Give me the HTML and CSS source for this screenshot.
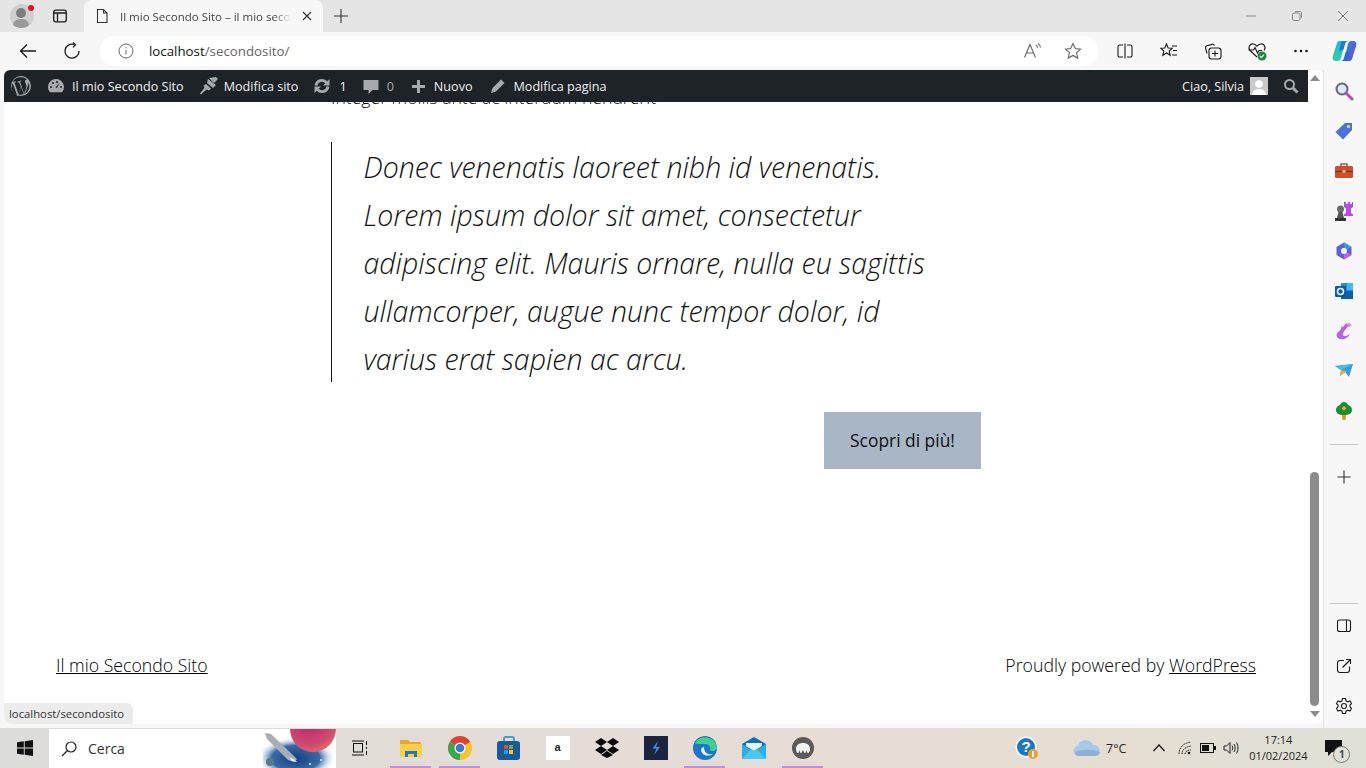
FILE: index.html
```html
<!DOCTYPE html>
<html lang="it">

<head>
    <meta charset="UTF-8">
    <title>Il mio Secondo Sito</title>
    <link rel="stylesheet" href="styles.css">
</head>

<body>
    <!-- barra schede -->
    <div class="tabstrip">
        <div class="profile">
            <svg width="24" height="24" viewBox="0 0 24 24"><circle cx="12" cy="12" r="12" fill="#cfcfcf"/><circle cx="11" cy="9" r="5" fill="#7d7d7d"/><path d="M3 21c1-5 4-6 8-6s7 1 8 6c-2 2-5 3-8 3s-6-1-8-3z" fill="#9a9a9a"/></svg>
            <span class="profile-dot"></span>
        </div>
        <div class="strip-btn">
            <svg width="16" height="16" viewBox="0 0 16 16" fill="none" stroke="#1a1a1a" stroke-width="1.3"><rect x="1.7" y="2.2" width="12.6" height="11.6" rx="2"/><path d="M1.7 5h12.6M5.5 5v8.8"/></svg>
        </div>
        <div class="tab">
            <svg width="16" height="16" viewBox="0 0 16 16" fill="none" stroke="#333" stroke-width="1.1"><path d="M3.5 1.5h6l3.5 3.5v9.5h-9.500zM9.5 1.5V5H13"/></svg>
            <span class="tab-title">Il mio Secondo Sito – il mio secondo</span>
            <svg width="12" height="12" viewBox="0 0 12 12" stroke="#333" stroke-width="1.2"><path d="M2 2l8 8M10 2l-8 8"/></svg>
        </div>
        <div class="strip-btn new-tab">
            <svg width="16" height="16" viewBox="0 0 16 16" stroke="#333" stroke-width="1.1"><path d="M8 1v14M1 8h14"/></svg>
        </div>
        <div class="window-btns">
            <svg width="12" height="12" viewBox="0 0 12 12" stroke="#8a8a8a"><path d="M1 6h10"/></svg>
            <svg width="12" height="12" viewBox="0 0 12 12" fill="none" stroke="#8a8a8a"><rect x="1.5" y="3" width="7.5" height="7.5" rx="1.5"/><path d="M4 1.5h5c1 0 1.5.5 1.5 1.5v5"/></svg>
            <svg width="12" height="12" viewBox="0 0 12 12" stroke="#777"><path d="M1 1l10 10M11 1L1 11"/></svg>
        </div>
    </div>

    <!-- barra indirizzi -->
    <div class="toolbar">
        <div class="nav-btn back">
            <svg width="18" height="18" viewBox="0 0 18 18" fill="none" stroke="#1a1a1a" stroke-width="1.3"><path d="M17 9H1.500M8 2.500L1.500 9 8 15.500"/></svg>
        </div>
        <div class="nav-btn reload">
            <svg width="18" height="18" viewBox="0 0 18 18" fill="none" stroke="#1a1a1a" stroke-width="1.3"><path d="M11 2.400a7 7 0 1 0 5 6.600"/><path d="M10 .5l2.500 2.200L10 5.400"/></svg>
        </div>
        <div class="address">
            <svg width="16" height="16" viewBox="0 0 16 16" fill="none" stroke="#666"><circle cx="8" cy="8" r="7"/><path d="M8 7v4.500M8 4.200v1.200"/></svg>
            <span class="url"><b>localhost</b>/secondosito/</span>
            <svg class="read" width="20" height="18" viewBox="0 0 20 18" fill="none" stroke="#666" stroke-width="1.1"><path d="M1.500 15.500L7 2.500l5.500 13M3.500 11h7"/><path d="M13 3c1 .6 1.500 1.600 1.700 2.600M15 1.500c1.400 1 2.300 2.400 2.500 4"/></svg>
            <svg class="fav" width="18" height="18" viewBox="0 0 18 18" fill="none" stroke="#666" stroke-width="1.1"><path d="M9 1.500l2.300 5 5.200.6-3.900 3.600 1.100 5.400L9 13.400l-4.700 2.700 1.100-5.400L1.500 7.100l5.200-.6z"/></svg>
        </div>
        <div class="tool-icons">
            <div class="tool-slot"><svg width="16" height="16" viewBox="0 0 16 16" fill="none" stroke="#1a1a1a" stroke-width="1.1"><path d="M6 2H2.500A1.500 1.500 0 0 0 1 3.500v9A1.500 1.500 0 0 0 2.500 14H6M10 2h3.500A1.500 1.500 0 0 1 15 3.500v9a1.500 1.500 0 0 1-1.500 1.500H10M8 .5v15"/></svg></div>
            <div class="tool-slot"><svg width="18" height="18" viewBox="0 0 18 18" fill="none" stroke="#1a1a1a" stroke-width="1.1"><path d="M6.500 2l1.700 4 4 .3-3 2.700 1 4.300-3.700-2.300L2.800 13.300l1-4.300-3-2.700 4-.3zM12 4h5M13 8.500h4M12 13h5"/></svg></div>
            <div class="tool-slot"><svg width="18" height="18" viewBox="0 0 18 18" fill="none" stroke="#1a1a1a" stroke-width="1.1"><path d="M3 11.500L1.600 6.200A2 2 0 0 1 3 3.800l5-1.400a2 2 0 0 1 2.400 1.100"/><rect x="5" y="6" width="12" height="11" rx="2.500"/><path d="M11 8.500v6M8 11.500h6"/></svg></div>
            <div class="tool-slot"><svg width="20" height="20" viewBox="0 0 20 20"><path d="M10 16L3 9.500C.5 6.500 3 2 6.500 3c1.500.3 2.700 1.200 3.500 2.300C10.800 4.200 12 3.300 13.500 3 17 2 19.500 6.500 17 9.500" fill="none" stroke="#1a1a1a" stroke-width="1.1"/><path d="M1.500 9h5l1.500-2.500L10.500 12l1.500-2.500h3" fill="none" stroke="#1a1a1a" stroke-width="1.1"/><circle cx="15" cy="15" r="4.500" fill="#1f8a3a"/><path d="M13 15l1.500 1.500 2.500-2.800" fill="none" stroke="#fff" stroke-width="1.1"/></svg></div>
            <div class="tool-slot"><svg width="16" height="16" viewBox="0 0 16 16" fill="#1a1a1a"><circle cx="2.500" cy="8" r="1.300"/><circle cx="8" cy="8" r="1.300"/><circle cx="13.500" cy="8" r="1.300"/></svg></div>
        </div>
        <svg class="copilot" width="25" height="24" viewBox="0 0 25 24">
            <defs>
                <linearGradient id="copLeft" x1="0" y1="0" x2="0" y2="1"><stop offset="0" stop-color="#1fb8d8"/><stop offset="1" stop-color="#2fd0a0"/></linearGradient>
                <linearGradient id="copRight" x1="0" y1="0" x2="1" y2="1"><stop offset="0" stop-color="#2a90e8"/><stop offset="1" stop-color="#6a48d8"/></linearGradient>
            </defs>
            <path d="M8 2h8c-2 0-3 1-3.500 3L9 19c-.5 2-1.500 3-3.500 3H4c-2.500 0-4-2-3.200-4.500L5 4c.5-1.500 1.500-2 3-2z" fill="url(#copLeft)"/>
            <path d="M17 22H9c2 0 3-1 3.500-3L16 5c.5-2 1.500-3 3.500-3H21c2.500 0 4 2 3.200 4.500L20 20c-.5 1.500-1.500 2-3 2z" fill="url(#copRight)"/>
            <path d="M13 5l-1.500 5.500L7 12l2-8c.3-1.200 1-2 2.500-2H16c-1.500 0-2.500 1-3 3z" fill="#1878e0"/>
            <path d="M12 19l1.500-5.500L18 12l-2 8c-.3 1.200-1 2-2.500 2H9c1.500 0 2.500-1 3-3z" fill="#2868e0"/>
        </svg>
    </div>

    <div class="workspace">
        <!-- finestra del sito -->
        <div class="viewport">
            <div class="adminbar">
                <div class="ab-item ab-logo">
                    <svg width="20" height="20" viewBox="0 0 20 20" fill="#a7aaad"><path d="M10 0a10 10 0 1 0 0 20 10 10 0 0 0 0-20zm0 1.200a8.800 8.800 0 0 1 6 2.300c-1.600-.1-2.700 1.700-1.700 3.200.5 1 1.100 2 1.100 3.500 0 1-.4 2.300-1 3.900l-1.200 4-4.300-12.600h1.200c.5-.1.500-.9 0-.9L7 5.600c-.5 0-.6.800 0 .9h1.100l1.700 4.600-2.400 7L3.400 6.500h1.300c.5-.1.500-.9 0-.9l-3 .1A8.800 8.800 0 0 1 10 1.200zM1.700 7.200l4.500 12.300a8.800 8.800 0 0 1-4.500-12.300zm8.400 3.800l2.600 7.300a8.800 8.800 0 0 1-5.300.1zm7.200-4.800a8.800 8.800 0 0 1-3.300 11.800l2.700-7.700c.5-1.300.7-2.400.6-4.100z"/></svg>
                </div>
                <div class="ab-item ab-site">
                    <svg width="18" height="18" viewBox="0 0 18 18" fill="#a7aaad"><path d="M9 2a8 8 0 0 0-8 8c0 2 .7 3.800 2 5.200h12A8 8 0 0 0 9 2z"/><g fill="#1d2327"><circle cx="4" cy="10" r="1"/><circle cx="6" cy="6" r="1"/><circle cx="10" cy="5" r="1"/><circle cx="14" cy="10" r="1"/><path d="M12.800 5.500L10 11l-1.500-.8z"/></g></svg>
                    <span>Il mio Secondo Sito</span>
                </div>
                <div class="ab-item ab-custom">
                    <svg width="20" height="20" viewBox="0 0 20 20" fill="#a7aaad"><path d="M10 2l5 5 4-4-2-2zM9 3l8 6-3 3-6-5zM7 8l5 4.500-2 2c-1-1-2-1-3-.5l-5 4.500-1-1 4-5c.5-1 .5-2-.5-3z"/></svg>
                    <span>Modifica sito</span>
                </div>
                <div class="ab-item ab-updates">
                    <svg width="18" height="18" viewBox="0 0 18 18"><g fill="none" stroke="#a7aaad" stroke-width="2.800"><path d="M3 8.500a6 6 0 0 1 10.500-3"/><path d="M15 9.500a6 6 0 0 1-10.500 3"/></g><g fill="#a7aaad"><path d="M16.500 2v6.500H10z"/><path d="M1.500 16v-6.500H8z"/></g></svg>
                    <span>1</span>
                </div>
                <div class="ab-item ab-comments">
                    <svg width="18" height="18" viewBox="0 0 18 18" fill="#a7aaad"><path d="M1.500 3h15v10h-6l-4 4v-4h-5z"/></svg>
                    <span class="dim">0</span>
                </div>
                <div class="ab-item ab-new">
                    <svg width="15" height="15" viewBox="0 0 15 15" fill="#a7aaad"><path d="M6 1h3v5h5v3H9v5H6V9H1V6h5z"/></svg>
                    <span>Nuovo</span>
                </div>
                <div class="ab-item ab-edit">
                    <svg width="16" height="16" viewBox="0 0 16 16" fill="#a7aaad"><path d="M11 1.500l3.500 3.500-8.500 8.500-5 1.500 1.500-5z"/></svg>
                    <span>Modifica pagina</span>
                </div>
                <div class="ab-right">
                    <span>Ciao, Silvia</span>
                    <svg class="avatar" width="18" height="18" viewBox="0 0 18 18"><rect width="18" height="18" fill="#c9c9c9"/><circle cx="9" cy="7" r="3.800" fill="#fff"/><path d="M2 18c.5-4 3-6 7-6s6.500 2 7 6z" fill="#fff"/></svg>
                    <svg class="ab-search" width="16" height="16" viewBox="0 0 16 16" fill="none" stroke="#a7aaad"><circle cx="6.500" cy="6.500" r="4.500" stroke-width="2"/><path d="M10 10l4.500 4.500" stroke-width="3"/></svg>
                </div>
            </div>

            <div class="page-row">
                <div class="page">
                    <div class="content">
                        <div class="cut-wrap"><p class="cut-line">Integer mollis ante ac interdum hendrerit</p></div>
                        <blockquote><p>Donec venenatis laoreet nibh id venenatis. Lorem ipsum dolor sit amet, consectetur adipiscing elit. Mauris ornare, nulla eu sagittis ullamcorper, augue nunc tempor dolor, id varius erat sapien ac arcu.</p></blockquote>
                        <div class="btn-row"><a class="more-btn">Scopri di più!</a></div>
                    </div>
                    <div class="site-footer">
                        <a>Il mio Secondo Sito</a>
                        <span>Proudly powered by <a>WordPress</a></span>
                    </div>
                </div>
                <div class="scrollbar">
                    <span class="arrow-up"></span>
                    <div class="thumb"></div>
                    <span class="arrow-down"></span>
                </div>
            </div>
            <div class="status-tip">localhost/secondosito</div>
        </div>

        <!-- barra laterale del browser -->
        <div class="sidebar">
            <div class="side-icon"><svg width="20" height="20" viewBox="0 0 20 20" fill="none"><circle cx="8" cy="8" r="5.500" stroke="#5a6a78" stroke-width="2" fill="#d8ecf8"/><path d="M12 12l6 6" stroke="#b04ac8" stroke-width="3" stroke-linecap="round"/></svg></div>
            <div class="side-icon"><svg width="18" height="18" viewBox="0 0 18 18"><path d="M10 1h7v7L8 17.500 .5 10z" fill="#4a70e0"/><circle cx="13.500" cy="4.500" r="1.800" fill="#c8d850"/></svg></div>
            <div class="side-icon"><svg width="18" height="16" viewBox="0 0 18 16"><path d="M6 3V1h6v2" fill="none" stroke="#b05a30" stroke-width="1.500"/><rect y="3" width="18" height="12" rx="1.500" fill="#c8502a"/><rect y="8" width="18" height="1.200" fill="#7a2e14"/><rect x="7.500" y="7" width="3" height="3" fill="#f0b060"/></svg></div>
            <div class="side-icon"><svg width="18" height="20" viewBox="0 0 18 20"><path d="M9 1h2v2h2V1h2v2h2V1h1v5l-2 1.500V12l2 1.500V15H9v-1.500l2-1.500V7.500L9 6z" fill="#b84ae8"/><circle cx="5.500" cy="8" r="3.500" fill="#6a6a6a"/><path d="M3.500 11h4L9 17H2z" fill="#555"/><rect y="17" width="11" height="3" fill="#333"/></svg></div>
            <div class="side-icon"><svg width="18" height="18" viewBox="0 0 18 18"><path d="M9 .5l7.500 4.500v8L9 17.500 1.500 13V5z" fill="#5a62d8"/><path d="M9 .5l7.500 4.500-4 2.500L9 5.500z" fill="#3a9ae0"/><path d="M9 17.500l7.500-4.500-4-2.500L9 12.500z" fill="#c860d8"/><circle cx="9" cy="9" r="3" fill="#f4f4f8"/></svg></div>
            <div class="side-icon"><svg width="18" height="18" viewBox="0 0 18 18"><rect x="6" y="1" width="12" height="16" rx="1" fill="#1a90d8"/><rect x="12" y="1" width="6" height="7" fill="#40b8f0"/><rect x="6" y="9" width="12" height="8" fill="#0a60b0"/><rect y="4" width="11" height="11" rx="1" fill="#0a5ab0"/><circle cx="5.500" cy="9.500" r="3" fill="none" stroke="#fff" stroke-width="1.500"/></svg></div>
            <div class="side-icon"><svg width="20" height="20" viewBox="0 0 18 20"><path d="M6 3c1 4 0 6-3 8-2 2-2 6 2 7 4 1 8-1 10-5-3 2-6 3-7 1-1-2 3-6 6-10L11 2C10 4 8 6 7 6z" fill="#b860e8"/><path d="M14 1l1 2 2 1-2 1-1 2-1-2-2-1 2-1z" fill="#c890f0"/></svg></div>
            <div class="side-icon"><svg width="18" height="14" viewBox="0 0 18 14"><path d="M0 2l18-2-4 13-4-5-5 4 1-6z" fill="#3a9ae0"/><path d="M0 2l6 4 12-6z" fill="#40c0f0"/><path d="M5 12l1-6 6 1z" fill="#e0b040"/></svg></div>
            <div class="side-icon"><svg width="16" height="18" viewBox="0 0 16 18"><path d="M8 0c2 0 3.500 1.500 4 3 2.500.5 4 2.500 4 5 0 3-2.500 5-8 5s-8-2-8-5c0-2.500 1.500-4.500 4-5 .5-1.500 2-3 4-3z" fill="#1f8a2e"/><path d="M6 13h4l-.5 5h-3z" fill="#c8a030"/><path d="M8 4l2.200 2.200L8 8.400 5.800 6.200z" fill="#d8c040"/></svg></div>
            <div class="side-sep"></div>
            <div class="side-icon"><svg width="14" height="14" viewBox="0 0 14 14" stroke="#333" stroke-width="1.1"><path d="M7 .5v13M.5 7h13"/></svg></div>
            <div class="side-spacer"></div>
            <div class="side-sep side-sep-low"></div>
            <div class="side-icon"><svg width="16" height="14" viewBox="0 0 16 14" fill="none" stroke="#1a1a1a" stroke-width="1.1"><rect x="1.500" y="1" width="13" height="11.500" rx="2"/><path d="M10.500 1v11.500"/></svg></div>
            <div class="side-icon"><svg width="16" height="16" viewBox="0 0 16 16" fill="none" stroke="#1a1a1a" stroke-width="1.1"><path d="M8 2.500H4A2.500 2.500 0 0 0 1.500 5v7A2.500 2.500 0 0 0 4 14.500h7a2.500 2.500 0 0 0 2.500-2.500V8.500M6.500 9.500l8-8M10 1.500h4.500V6"/></svg></div>
            <div class="side-icon"><svg width="18" height="18" viewBox="0 0 18 18" fill="none" stroke="#1a1a1a" stroke-width="1.1"><circle cx="9" cy="9" r="2.500"/><path d="M7.500 1.500h3l.5 2.300 1.700 1 2.300-.8 1.500 2.600L15 8v2l1.500 1.400-1.500 2.600-2.300-.8-1.700 1-.5 2.300h-3l-.5-2.300-1.700-1-2.300.8-1.500-2.600L3 10V8L1.500 6.600 3 4l2.300.8 1.700-1z"/></svg></div>
        </div>
    </div>

    <!-- barra di Windows -->
    <div class="taskbar">
        <div class="start">
            <svg width="16" height="16" viewBox="0 0 16 16" fill="#111"><path d="M0 2.300l6.800-1v6.300H0zM7.700 1.200L16 0v7.600H7.700zM0 8.500h6.800v6.200L0 13.700zM7.700 8.500H16V16l-8.300-1.200z"/></svg>
        </div>
        <div class="search-box">
            <svg width="16" height="16" viewBox="0 0 16 16" fill="none" stroke="#222" stroke-width="1.2"><circle cx="10" cy="6" r="5"/><path d="M6.500 9.500L1 15"/></svg>
            <span>Cerca</span>
            <svg class="search-art" width="73" height="39" viewBox="0 0 73 39">
                <defs>
                    <radialGradient id="planet" cx=".4" cy=".3" r=".8"><stop offset="0" stop-color="#b8206e"/><stop offset=".7" stop-color="#d04a70"/><stop offset="1" stop-color="#e8785a"/></radialGradient>
                    <radialGradient id="space" cx=".45" cy=".75" r=".55"><stop offset="0" stop-color="#123f80"/><stop offset=".6" stop-color="#3a6aa8"/><stop offset="1" stop-color="#fff" stop-opacity="0"/></radialGradient>
                </defs>
                <rect width="73" height="39" fill="url(#space)"/>
                <circle cx="50" cy="0" r="23" fill="url(#planet)"/>
                <path d="M2 4l6 1 26 25-3 3-6-2L4 10z" fill="#a8aeb4"/>
                <path d="M26 28l6 3 2 2-5-1z" fill="#e8f4ff"/>
                <circle cx="7" cy="33" r="4" fill="#5a7a88"/>
                <circle cx="47" cy="35" r="1" fill="#fff"/>
                <circle cx="58" cy="31" r="1" fill="#dfe8f4"/>
            </svg>
        </div>
        <div class="task-icon task-view">
            <svg width="17" height="16" viewBox="0 0 17 16" fill="none" stroke="#111"><rect x="2.500" y="3.500" width="9" height="8.500"/><path d="M1 1h12M1 15h12M15.500 1v4M15.500 7v2M15.500 11v4"/></svg>
        </div>
        <div class="task-icon running">
            <svg width="22" height="20" viewBox="0 0 22 20"><path d="M0 2h8l2 2h11v14H0z" fill="#e8a82a"/><rect y="6" width="22" height="13" fill="#f8d048"/><path d="M5 13h12v6h-3v-3H8v3H5z" fill="#1a78c8"/></svg>
        </div>
        <div class="task-icon running">
            <svg width="24" height="24" viewBox="0 0 24 24"><path d="M1.600 6A12 12 0 0 1 22.400 6L12 12z" fill="#e0432f"/><path d="M22.400 6A12 12 0 0 1 12 24L12 12z" fill="#f8c42a"/><path d="M12 24A12 12 0 0 1 1.600 6L12 12z" fill="#3aa84a"/><circle cx="12" cy="12" r="5.500" fill="#fff"/><circle cx="12" cy="12" r="4.300" fill="#3a78e0"/></svg>
        </div>
        <div class="task-icon">
            <svg width="24" height="24" viewBox="0 0 24 24"><path d="M7 5V3a2 2 0 0 1 2-2h6a2 2 0 0 1 2 2v2" fill="none" stroke="#3aa0e0" stroke-width="2"/><rect y="5" width="23" height="19" rx="3" fill="#1a5a9a"/><rect x="7" y="9" width="4" height="4" fill="#e84a2a"/><rect x="12" y="9" width="4" height="4" fill="#6ab82a"/><rect x="7" y="14" width="4" height="4" fill="#2a9ae8"/><rect x="12" y="14" width="4" height="4" fill="#f8c02a"/></svg>
        </div>
        <div class="task-icon">
            <div class="amazon">a</div>
        </div>
        <div class="task-icon">
            <svg width="24" height="20" viewBox="0 0 24 20" fill="#0a0a0a"><path d="M6 0l6 4-6 4-6-4zM18 0l6 4-6 4-6-4zM6 8l6 4-6 4-6-4zM18 8l6 4-6 4-6-4zM12 13l6 4-6 3-6-3z"/></svg>
        </div>
        <div class="task-icon">
            <svg width="24" height="24" viewBox="0 0 24 24"><rect width="24" height="24" fill="#1c2340"/><path d="M14 5L8.500 12.500h4L10 19l6-8h-4z" fill="#2a9ae8"/></svg>
        </div>
        <div class="task-icon running">
            <svg width="24" height="24" viewBox="0 0 24 24"><circle cx="12" cy="12" r="12" fill="#1a78c8"/><path d="M2 7a12 12 0 0 1 22 4c0 4-5 5-7 3 1-3-1-6-5-6-5 0-9 0-10-1z" fill="#40d090"/><path d="M11 11c-3 0-4 4-1 7 3 2 7 2 10 0-5 1-9-1-9-7z" fill="#e8f4f8"/></svg>
        </div>
        <div class="task-icon">
            <svg width="24" height="22" viewBox="0 0 24 22"><rect y="7" width="24" height="15" fill="#2ab0e8"/><path d="M0 7l12-7 12 7-12 8z" fill="#0a70c0"/><path d="M4 6h16v3l-8 5-8-5z" fill="#e8f8ff"/><path d="M0 22l9-10 3 2 3-2 9 10z" fill="#48c8f0"/></svg>
        </div>
        <div class="task-icon running">
            <svg width="22" height="22" viewBox="0 0 22 22"><circle cx="11" cy="11" r="11" fill="#5a5a5a"/><path d="M4 12c0-4 3-6 7-6s7 2 7 6c0 2-1 4-2 4s-1-2-2-3c0 2 0 3-1 3s-1-2-2-3c-1 1-1 3-2 3s-1-1-1-3c-1 1-1 3-2 3s-2-2-2-4z" fill="#f2f2f2"/></svg>
        </div>

        <div class="tray">
            <svg class="help" width="24" height="24" viewBox="0 0 24 24"><circle cx="11" cy="11" r="10.500" fill="#fff"/><circle cx="11" cy="11" r="9" fill="#1a78c8"/><text x="11" y="16" font-family="Liberation Sans" font-size="15" font-weight="700" fill="#fff" text-anchor="middle">?</text><circle cx="18" cy="18" r="5" fill="#e8a030"/><rect x="17.200" y="15" width="1.600" height="6" fill="#fff"/></svg>
            <svg class="cloud" width="28" height="18" viewBox="0 0 28 18"><path d="M6 17a5 5 0 0 1-1-10 8 8 0 0 1 15-1 5.500 5.500 0 0 1 2 11z" fill="#a8c8e8"/><path d="M2 13c6-3 18-3 25 0a5 5 0 0 1-5 4H6a5 5 0 0 1-4-4z" fill="#8ab0d8"/></svg>
            <span class="temp">7°C</span>
            <svg class="chevron" width="12" height="8" viewBox="0 0 12 8" fill="none" stroke="#111" stroke-width="1.2"><path d="M.5 7L6 1l5.500 6"/></svg>
            <svg class="wifi" width="14" height="14" viewBox="0 0 14 14" fill="none" stroke="#222"><path d="M1 13C1 7 5 2 13 1M4 13c0-4 3-7 9-8M7 13c0-2 2-4 6-4" stroke-dasharray="1.500 .8"/><circle cx="11" cy="12" r="1.300" fill="#111" stroke="none"/></svg>
            <svg class="battery" width="16" height="10" viewBox="0 0 16 10"><rect x=".5" y=".5" width="13" height="9" fill="none" stroke="#111"/><rect x="2" y="2" width="7" height="6" fill="#111"/><rect x="14" y="3" width="2" height="4" fill="#111"/></svg>
            <svg class="speaker" width="16" height="14" viewBox="0 0 16 14" fill="none" stroke="#222"><path d="M1 5h2.500L7 1.500v11L3.500 9H1zM9 4.500c1 1.500 1 3.500 0 5M11 3c1.600 2.500 1.600 5.500 0 8M13.500 1.500c2 3.500 2 7.500 0 11"/></svg>
            <div class="clock">17:14<br>01/02/2024</div>
            <div class="notify">
                <svg width="17" height="17" viewBox="0 0 17 17" fill="#111"><path d="M0 0h17v12H7l-4 4v-4H0z"/></svg>
                <span class="notify-count">1</span>
            </div>
        </div>
    </div>
</body>

</html>
```

FILE: styles.css
```css
* {
    box-sizing: border-box;
}

html,
body {
    margin: 0;
    height: 768px;
    overflow: hidden;
}

body {
    display: flex;
    flex-direction: column;
    font-family: "Open Sans", sans-serif;
    background-color: #f7f7f7;
    color: #111;
}

svg {
    display: block;
    flex-shrink: 0;
}

/* barra schede */
.tabstrip {
    height: 32px;
    display: flex;
    align-items: flex-end;
    background: #e5e5e5;
}

.profile {
    position: relative;
    width: 36px;
    height: 32px;
    padding: 4px 0 0 10px;
}

.profile-dot {
    position: absolute;
    left: 28px;
    top: 5px;
    width: 6px;
    height: 6px;
    border-radius: 50%;
    background: #e81123;
}

.strip-btn {
    width: 48px;
    height: 32px;
    display: flex;
    align-items: center;
    justify-content: center;
}

.tab {
    width: 239px;
    height: 32px;
    display: flex;
    align-items: center;
    padding: 0 10px;
    gap: 10px;
    background: #f7f7f7;
    border-radius: 8px 8px 0 0;
}

.tab-title {
    flex: 1;
    font-size: 11.5px;
    color: #444;
    white-space: nowrap;
    overflow: hidden;
    -webkit-mask-image: linear-gradient(to right, #000 90%, transparent);
    mask-image: linear-gradient(to right, #000 90%, transparent);
}

.new-tab {
    width: 36px;
}

.window-btns {
    margin-left: auto;
    height: 32px;
    display: flex;
    align-items: center;
    gap: 34px;
    padding-right: 17px;
}

/* barra indirizzi */
.toolbar {
    height: 38px;
    display: flex;
    align-items: center;
    background: #f7f7f7;
}

.nav-btn {
    width: 44px;
    display: flex;
    justify-content: center;
}

.back {
    margin-left: 6px;
}

.address {
    width: 998px;
    height: 30px;
    margin-left: 6px;
    display: flex;
    align-items: center;
    padding: 0 16px 0 18px;
    background: #fff;
    border-radius: 15px;
}

.url {
    margin-left: 15px;
    font-size: 13.3px;
    color: #666;
}

.url b {
    font-weight: 400;
    color: #111;
}

.read {
    margin-left: auto;
}

.fav {
    margin-left: 21px;
}

.tool-icons {
    display: flex;
    align-items: center;
    margin-left: 5px;
}

.tool-slot {
    width: 44px;
    display: flex;
    justify-content: center;
}

.copilot {
    margin-left: 9px;
}

/* zona centrale */
.workspace {
    height: 658px;
    display: flex;
}

.viewport {
    position: relative;
    width: 1319px;
    height: 654px;
    margin-left: 4px;
    display: flex;
    flex-direction: column;
    background: #fff;
    border-radius: 6px 6px 8px 8px;
    overflow: hidden;
}

.adminbar {
    height: 32px;
    width: 1304px;
    display: flex;
    align-items: center;
    background: #1d2327;
    color: #f0f0f1;
    font-size: 12.6px;
    z-index: 1;
}

.ab-item {
    display: flex;
    align-items: center;
    gap: 8px;
    white-space: nowrap;
}

.ab-logo {
    margin-left: 7px;
}

.ab-site {
    margin-left: 16px;
    gap: 7px;
}

.ab-custom {
    margin-left: 15px;
    gap: 5px;
}

.ab-updates {
    margin-left: 15px;
}

.ab-comments {
    margin-left: 15px;
    gap: 7px;
}

.ab-new {
    margin-left: 17px;
}

.ab-edit {
    margin-left: 17px;
}

.dim {
    color: #a7aaad;
}

.ab-right {
    margin-left: auto;
    display: flex;
    align-items: center;
    padding-right: 9px;
}

.avatar {
    margin-left: 6px;
}

.ab-search {
    margin-left: 15px;
}

.page-row {
    flex: 1;
    min-height: 0;
    display: flex;
}

.page {
    width: 1304px;
    display: flex;
    flex-direction: column;
    justify-content: space-between;
    font-size: 18px;
}

.content {
    width: 650px;
    margin-left: 327px;
}

/* riga tagliata dallo scroll, sotto la admin bar */
.cut-wrap {
    height: 10px;
    overflow: hidden;
}

.cut-line {
    margin: -17px 0 0;
    line-height: 25px;
    font-size: 17.6px;
    font-weight: 300;
    white-space: nowrap;
}

blockquote {
    display: flow-root;
    margin: 30px 0 0;
    padding: 0 30px 0 31.5px;
    border-left: 1px solid #111;
    font-size: 28.5px;
    line-height: 48px;
    font-style: italic;
    font-weight: 300;
}

blockquote p {
    margin: 1px 0 -1px;
}

.btn-row {
    display: flex;
    justify-content: flex-end;
    margin-top: 30px;
}

.more-btn {
    width: 157px;
    height: 57px;
    padding-bottom: 2px;
    display: flex;
    align-items: center;
    justify-content: center;
    background: #a9b6c6;
    font-size: 17.4px;
}

.site-footer {
    display: flex;
    justify-content: space-between;
    padding: 0 52px 47px;
    font-size: 17.7px;
    font-weight: 300;
    color: #000;
}

.site-footer a {
    text-decoration: underline;
}

.scrollbar {
    position: relative;
    width: 15px;
}

.thumb {
    position: absolute;
    left: 2px;
    top: 370px;
    width: 9px;
    height: 234px;
    border-radius: 5px;
    background: #8b8b8b;
}

.arrow-up,
.arrow-down {
    position: absolute;
    left: 2px;
    width: 0;
    height: 0;
    border-left: 5px solid transparent;
    border-right: 5px solid transparent;
}

.arrow-up {
    top: -27px;
    border-bottom: 6px solid #8b8b8b;
}

.arrow-down {
    bottom: 7px;
    border-top: 6px solid #8b8b8b;
}

.status-tip {
    position: absolute;
    left: 0;
    bottom: 0;
    height: 21px;
    width: 129px;
    padding-left: 5px;
    line-height: 21px;
    font-size: 11.3px;
    color: #333;
    background: #ececec;
    border-radius: 0 6px 0 0;
    z-index: 2;
}

/* barra laterale */
.sidebar {
    width: 43px;
    display: flex;
    flex-direction: column;
    padding: 1px 2px 2px 0;
    border-left: 1px solid #e4e4e4;
}

.side-icon {
    height: 40px;
    display: flex;
    align-items: center;
    justify-content: center;
    flex-shrink: 0;
}

.side-sep {
    height: 1px;
    width: 28px;
    margin: 13px auto 12px;
    background: #c8c8c8;
    flex-shrink: 0;
}

.side-sep-low {
    margin-bottom: 2px;
}

.side-spacer {
    flex: 1;
}

/* barra di Windows */
.taskbar {
    height: 40px;
    display: flex;
    align-items: center;
    background: linear-gradient(to right, #dcdcd8, #e6dcd6 50%, #e6ddd2 80%, #dfe0d6);
}

.start {
    width: 49px;
    display: flex;
    justify-content: center;
}

.search-box {
    position: relative;
    width: 287px;
    height: 39px;
    margin-top: 1px;
    display: flex;
    align-items: center;
    gap: 11px;
    padding-left: 12px;
    background: #fff;
    font-size: 14px;
    color: #333;
    overflow: hidden;
}

.search-art {
    position: absolute;
    right: 0;
    top: 0;
}

.task-icon {
    position: relative;
    width: 49px;
    height: 40px;
    display: flex;
    align-items: center;
    justify-content: center;
}

.task-view {
    width: 50px;
    padding-right: 3px;
}

.running::after {
    content: "";
    position: absolute;
    left: 4px;
    right: 4px;
    bottom: 0;
    height: 2px;
    background: #c08fe0;
}

.amazon {
    width: 24px;
    height: 24px;
    background: #fff;
    text-align: center;
    font: 700 11px/23px "Liberation Sans", sans-serif;
    color: #222;
}

.tray {
    flex: 1;
    display: flex;
    align-items: center;
    padding-left: 188px;
}

.cloud {
    margin-left: 34px;
}

.temp {
    margin-left: 5px;
    font-size: 12.5px;
    color: #222;
}

.chevron {
    margin-left: 27px;
}

.wifi {
    margin-left: 13px;
}

.battery {
    margin-left: 8px;
}

.speaker {
    margin-left: 7px;
}

.clock {
    width: 66px;
    margin-left: 6px;
    text-align: center;
    font-size: 11px;
    line-height: 16px;
    color: #222;
}

.notify {
    position: relative;
    margin-left: 14px;
}

.notify-count {
    position: absolute;
    left: 8px;
    top: 6px;
    width: 17px;
    height: 17px;
    border: 1px solid #777;
    border-radius: 50%;
    background: #e0e0dc;
    text-align: center;
    font-size: 10px;
    line-height: 15px;
    font-weight: 700;
    color: #444;
}
```
